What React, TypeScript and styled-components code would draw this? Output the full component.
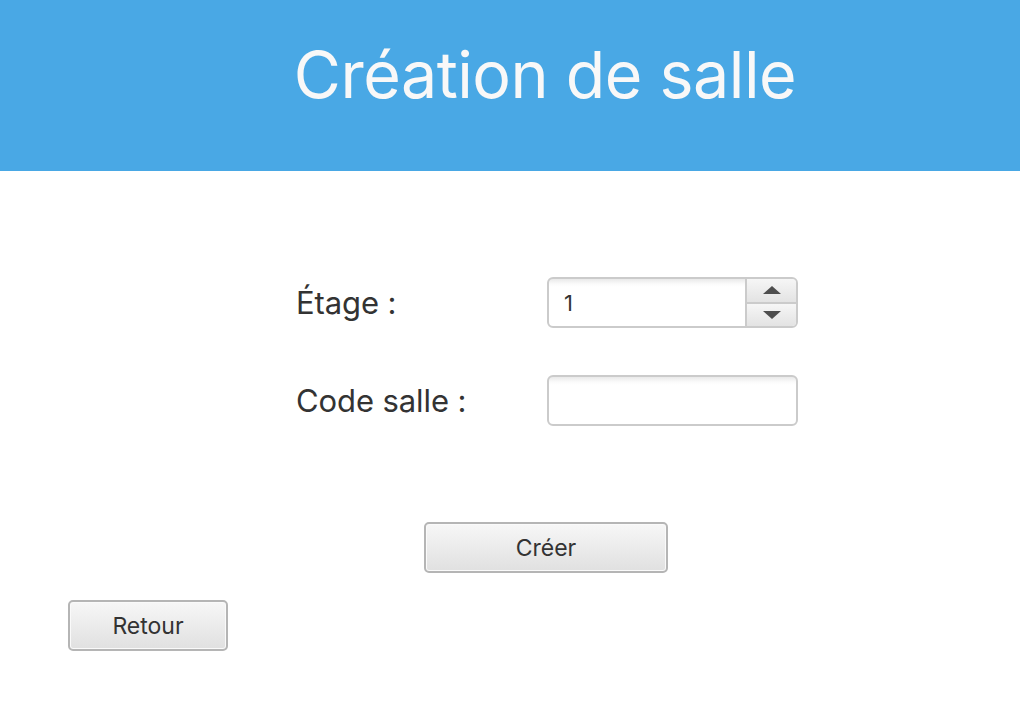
import React from "react";
import styled, { createGlobalStyle } from "styled-components";

const Global = createGlobalStyle`
  html, body { margin: 0; padding: 0; background: #ffffff; }
  body { font-family: Inter, "Noto Sans", sans-serif; width: 1020px; height: 704px; overflow: hidden; }
`;

const Page = styled.div`
  width: 1020px;
  height: 704px;
  display: flex;
  flex-direction: column;
  background: #fff;
`;

const Header = styled.header`
  height: 171px;
  background: #49a8e5;
  display: flex;
  align-items: center;
  justify-content: center;
  padding-left: 70px;
  box-sizing: border-box;
`;

const Title = styled.h1`
  margin: 0;
  font-weight: 400;
  font-size: 64.5px;
  color: #f8f8f8;
  letter-spacing: -0.5px;
  transform: translateY(-11px);
`;

const Form = styled.div`
  display: grid;
  grid-template-columns: 251px 251px;
  row-gap: 47px;
  align-items: center;
  margin: 106px 0 0 296px;
`;

const Label = styled.label`
  font-size: 31px;
  color: #333;
  letter-spacing: -0.1px;
`;

const fieldBg = `linear-gradient(#e9e9e9 0px, #fbfbfb 5px, #ffffff 8px)`;

const Spinner = styled.div`
  height: 51px;
  box-sizing: border-box;
  border: 2px solid #cbcbcb;
  border-radius: 6px;
  display: flex;
  overflow: hidden;
  background: ${fieldBg};
`;

const SpinValue = styled.div`
  flex: 1;
  display: flex;
  align-items: center;
  padding-left: 15px;
  font-size: 22px;
  color: #333;
`;

const Arrows = styled.div`
  width: 49px;
  border-left: 2px solid #cbcbcb;
  display: flex;
  flex-direction: column;
`;

const ArrowBtn = styled.div<{ $down?: boolean }>`
  flex: 1;
  display: flex;
  align-items: center;
  justify-content: center;
  background: linear-gradient(#f6f6f6, #e3e3e3);
  border-top: ${(p) => (p.$down ? "2px solid #cbcbcb" : "none")};
`;

const Triangle = styled.div<{ $down?: boolean }>`
  width: 0;
  height: 0;
  border-left: 9px solid transparent;
  border-right: 9px solid transparent;
  ${(p) => (p.$down ? "border-top: 8px solid #4e4e4e;" : "border-bottom: 8px solid #4e4e4e;")}
`;

const TextField = styled.div`
  height: 51px;
  box-sizing: border-box;
  border: 2px solid #cbcbcb;
  border-radius: 6px;
  background: ${fieldBg};
`;

const Button = styled.button<{ $w: number }>`
  width: ${(p) => p.$w}px;
  height: 51px;
  box-sizing: border-box;
  border: 2px solid #b5b5b5;
  border-radius: 5px;
  box-shadow: inset 0 0 0 1px #fafafa;
  background: linear-gradient(#f7f7f7, #e0e0e0);
  font-family: Inter, "Noto Sans", sans-serif;
  font-size: 23px;
  color: #333;
  letter-spacing: 0;
  padding: 0;
`;

const CreateRow = styled.div`
  display: flex;
  margin: 96px 0 0 424px;
`;

const BackRow = styled.div`
  display: flex;
  margin: 27px 0 0 68px;
`;

export default function App() {
  return (
    <Page>
      <Global />
      <Header>
        <Title>Création de salle</Title>
      </Header>
      <Form>
        <Label>Étage :</Label>
        <Spinner>
          <SpinValue>1</SpinValue>
          <Arrows>
            <ArrowBtn>
              <Triangle />
            </ArrowBtn>
            <ArrowBtn $down>
              <Triangle $down />
            </ArrowBtn>
          </Arrows>
        </Spinner>
        <Label>Code salle :</Label>
        <TextField />
      </Form>
      <CreateRow>
        <Button $w={244}>Créer</Button>
      </CreateRow>
      <BackRow>
        <Button $w={160}>Retour</Button>
      </BackRow>
    </Page>
  );
}
